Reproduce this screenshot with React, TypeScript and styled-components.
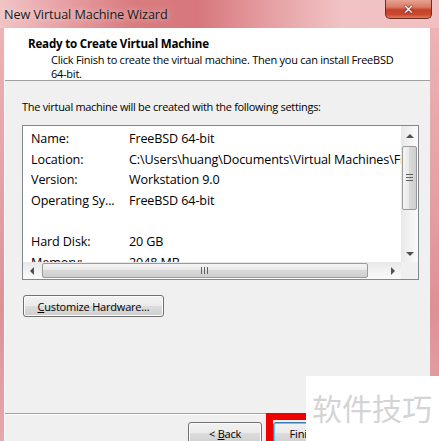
import React from "react";
import styled, { createGlobalStyle } from "styled-components";

const Global = createGlobalStyle`
  html, body { margin: 0; padding: 0; background: #fff; }
  body { font-family: "Open Sans", "Noto Sans", sans-serif; }
  * { box-sizing: border-box; }
`;

const Window = styled.div`
  position: relative;
  width: 439px;
  height: 441px;
  overflow: hidden;
  display: flex;
  flex-direction: column;
  background: linear-gradient(180deg, #eeb6b8 0%, #e6a2a5 40%, #dd9195 70%, #e7a8ab 100%);
`;

const TitleBar = styled.div`
  height: 28px;
  flex: none;
  display: flex;
  align-items: flex-start;
  justify-content: space-between;
  background: linear-gradient(90deg, #f1c4c6 0%, #e9a6a9 12%, #d97c80 30%, #d7777b 45%, #e6a1a4 62%, #f1c3c5 78%, #f0c0c2 100%);
`;

const TitleText = styled.span`
  font-size: 12.7px;
  color: #1a1a1a;
  margin: 5px 0 0 4px;
  letter-spacing: -0.1px;
  text-shadow: 0 0 6px rgba(255, 255, 255, 0.7);
`;

const CloseButton = styled.div`
  width: 47px;
  height: 19px;
  margin-right: 7px;
  border: 1px solid #6e2b24;
  border-top: none;
  border-radius: 0 0 5px 5px;
  background: linear-gradient(180deg, #e7a392 0%, #d77a63 40%, #c5412c 55%, #c9492f 80%, #dd7c5a 100%);
  display: flex;
  align-items: center;
  justify-content: center;
  color: #fff;
  font-family: "DejaVu Sans", sans-serif;
  font-weight: bold;
  font-size: 13px;
  text-shadow: 0 0 1px #5a1a10, 0 0 2px #5a1a10;
`;

const Body = styled.div`
  flex: 1;
  display: flex;
  margin: 0 9px 0 4px;
  min-height: 0;
`;

const Client = styled.div`
  flex: 1;
  display: flex;
  flex-direction: column;
  background: #f0f0f0;
  border-left: 1px solid #fbfbfb;
`;

const Header = styled.div`
  height: 53px;
  flex: none;
  background: #fff;
  border-bottom: 1px solid #a0a0a0;
  padding: 8px 0 0 23px;
  color: #000;
`;

const HeaderTitle = styled.div`
  font-weight: bold;
  font-size: 11.6px;
  letter-spacing: -0.2px;
  line-height: 16px;
`;

const HeaderSub = styled.div`
  padding: 1px 0 0 23px;
  line-height: 14px;
  width: 380px;
  font-size: 11px;
  letter-spacing: -0.25px;
`;

const Content = styled.div`
  flex: 1;
  display: flex;
  flex-direction: column;
  padding: 17px 11px 0 17px;
`;

const Intro = styled.div`
  font-size: 11px;
  letter-spacing: -0.3px;
  line-height: 16px;
  color: #000;
  margin: 1px 0 10px;
`;

const ListBox = styled.div`
  height: 155px;
  border: 1px solid #828790;
  background: #fff;
  display: grid;
  grid-template-columns: 1fr 17px;
  grid-template-rows: 1fr 17px;
  overflow: hidden;
`;

const Rows = styled.div`
  overflow: hidden;
  padding-top: 2px;
`;

const Row = styled.div`
  display: flex;
  height: 20.7px;
  align-items: center;
  font-size: 12.6px;
  color: #000;
  white-space: nowrap;
  letter-spacing: -0.12px;
`;

const Label = styled.span`
  width: 106px;
  flex: none;
  padding-left: 8px;
`;

const Value = styled.span`
  flex: none;
`;

const VScroll = styled.div`
  background: linear-gradient(90deg, #e8e8e8, #f4f4f4 60%, #fafafa);
  display: flex;
  flex-direction: column;
  align-items: center;
  padding-top: 1px;
`;

const HScroll = styled.div`
  grid-column: 1 / 2;
  background: linear-gradient(180deg, #e8e8e8, #f4f4f4 60%, #fafafa);
  display: flex;
  align-items: center;
`;

const Corner = styled.div`
  background: #f0f0f0;
`;

const Arrow = styled.div`
  width: 17px;
  height: 17px;
  flex: none;
  display: flex;
  align-items: center;
  justify-content: center;
`;

const VThumb = styled.div`
  width: 15px;
  height: 64px;
  margin-top: 2px;
  border: 1px solid #9a9a9a;
  border-radius: 2px;
  background: linear-gradient(90deg, #f5f5f5 0%, #e9e9e9 45%, #d9d9d9 50%, #cfcfcf 100%);
  display: flex;
  align-items: center;
  justify-content: center;
`;

const HThumb = styled.div`
  height: 15px;
  width: 326px;
  margin-left: 2px;
  border: 1px solid #9a9a9a;
  border-radius: 2px;
  background: linear-gradient(180deg, #f5f5f5 0%, #e9e9e9 45%, #d9d9d9 50%, #cfcfcf 100%);
  display: flex;
  align-items: center;
  justify-content: center;
`;

const Spacer = styled.div`
  flex: 1;
`;

const Button = styled.div<{ $w: number; $default?: boolean }>`
  width: ${(p) => p.$w}px;
  height: 22px;
  border: 1px solid ${(p) => (p.$default ? "#3c7fb1" : "#707070")};
  border-radius: 3px;
  background: linear-gradient(180deg, #f2f2f2 0%, #ebebeb 48%, #dddddd 50%, #cfcfcf 100%);
  box-shadow: inset 0 0 0 1px ${(p) => (p.$default ? "#48d4f6" : "#fcfcfc")};
  font-size: 11px;
  letter-spacing: -0.2px;
  color: #000;
  display: flex;
  align-items: center;
  justify-content: center;
  flex: none;
`;

const ButtonRow = styled.div`
  margin-top: 15px;
  display: flex;
  padding-left: 1px;
`;

const Footer = styled.div`
  margin-top: auto;
  height: 28px;
  flex: none;
  border-top: 1px solid #a0a0a0;
  box-shadow: inset 0 1px 0 #fff;
  display: flex;
  gap: 11px;
  padding: 8px 0 0 183px;
`;

const Highlight = styled.div`
  position: absolute;
  left: 266px;
  top: 413px;
  width: 90px;
  height: 40px;
  border: 7px solid #ee0000;
`;

const Watermark = styled.div`
  position: absolute;
  left: 306px;
  top: 376px;
  width: 140px;
  height: 70px;
  background: #fff;
  color: #d4d4d4;
  font-family: "Noto Sans CJK SC", sans-serif;
  font-size: 30px;
  line-height: 30px;
  padding: 16px 0 0 6px;
`;

const U = styled.span`
  text-decoration: underline;
`;

const Tri = ({ dir }: { dir: "up" | "down" | "left" | "right" }) => {
  const pts = {
    up: "0,4 4,0 8,4",
    down: "0,0 8,0 4,4",
    left: "4,0 4,8 0,4",
    right: "0,0 0,8 4,4",
  }[dir];
  const vert = dir === "up" || dir === "down";
  return (
    <svg width={vert ? 8 : 4} height={vert ? 4 : 8} viewBox={vert ? "0 0 8 4" : "0 0 4 8"}>
      <polygon points={pts} fill="#505050" />
    </svg>
  );
};

const Grip = ({ vertical }: { vertical?: boolean }) => (
  <svg width={vertical ? 7 : 8} height={vertical ? 8 : 7}>
    {[0, 3, 6].map((o) =>
      vertical ? (
        <rect key={o} x={0} y={o} width={7} height={1} fill="#606060" />
      ) : (
        <rect key={o} x={o} y={0} width={1} height={7} fill="#606060" />
      )
    )}
  </svg>
);

const rows: [string, string][] = [
  ["Name:", "FreeBSD 64-bit"],
  ["Location:", "C:\\Users\\huang\\Documents\\Virtual Machines\\FreeBSD 64-bit"],
  ["Version:", "Workstation 9.0"],
  ["Operating Sy...", "FreeBSD 64-bit"],
  ["", ""],
  ["Hard Disk:", "20 GB"],
  ["Memory:", "2048 MB"],
];

export default function App() {
  return (
    <>
      <Global />
      <Window>
        <TitleBar>
          <TitleText>New Virtual Machine Wizard</TitleText>
          <CloseButton>✕</CloseButton>
        </TitleBar>
        <Body>
          <Client>
            <Header>
              <HeaderTitle>Ready to Create Virtual Machine</HeaderTitle>
              <HeaderSub>
                Click Finish to create the virtual machine. Then you can install FreeBSD 64-bit.
              </HeaderSub>
            </Header>
            <Content>
              <Intro>The virtual machine will be created with the following settings:</Intro>
              <ListBox>
                <Rows>
                  {rows.map(([l, v], i) => (
                    <Row key={i}>
                      <Label>{l}</Label>
                      <Value>{v}</Value>
                    </Row>
                  ))}
                </Rows>
                <VScroll>
                  <Arrow>
                    <Tri dir="up" />
                  </Arrow>
                  <VThumb>
                    <Grip vertical />
                  </VThumb>
                  <Spacer />
                  <Arrow>
                    <Tri dir="down" />
                  </Arrow>
                </VScroll>
                <HScroll>
                  <Arrow>
                    <Tri dir="left" />
                  </Arrow>
                  <HThumb>
                    <Grip />
                  </HThumb>
                  <Spacer />
                  <Arrow>
                    <Tri dir="right" />
                  </Arrow>
                </HScroll>
                <Corner />
              </ListBox>
              <ButtonRow>
                <Button $w={141}>
                  <U>C</U>ustomize Hardware...
                </Button>
              </ButtonRow>
            </Content>
            <Footer>
              <Button $w={74}>
                &lt;&nbsp;<U>B</U>ack
              </Button>
              <Button $w={62} $default>
                Finish
              </Button>
            </Footer>
          </Client>
        </Body>
        <Highlight />
        <Watermark>软件技巧</Watermark>
      </Window>
    </>
  );
}
